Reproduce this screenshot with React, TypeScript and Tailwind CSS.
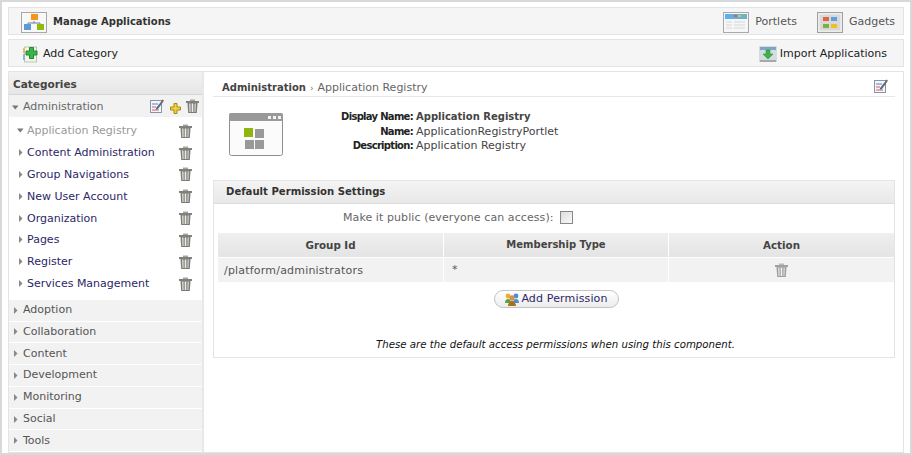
const Trash = ({ className = "" }: { className?: string }) => (
  <svg width="13" height="14" viewBox="0 0 13 14" className={className}>
    <path d="M4 .5h5v1.500H4z" fill="#a4a4a0" />
    <rect x="0" y="2" width="13" height="2" fill="#80807c" />
    <path d="M1.500 4h10l-.7 10H2.200z" fill="#7c7c78" />
    <path d="M3 4.500h1.500l.2 8.500H3.400z" fill="#d8d8d0" />
    <path d="M5.700 4.500h1.600v8.500H5.700z" fill="#ecece6" />
    <path d="M8.500 4.500H10l-.4 8.500H8.300z" fill="#c8c8c0" />
  </svg>
);

const Edit = () => (
  <svg width="14" height="14" viewBox="0 0 14 14">
    <rect x="0.500" y="1.500" width="11" height="12" fill="#f4f6fa" stroke="#8a94a8" />
    <path d="M2 5h6" stroke="#5a7fd0" />
    <path d="M2 8h4" stroke="#d06060" />
    <path d="M2 11h7" stroke="#d06060" />
    <path d="M6 9l6-7.500 1.500 1L8 10l-2.200.8z" fill="#5b6b7f" />
    <path d="M12 1l1.500 1" stroke="#a8552a" strokeWidth="1.500" />
  </svg>
);

const Plus = () => (
  <svg width="11" height="11" viewBox="0 0 11 11" className="mt-[5px] ml-[1px]">
    <path d="M4 .5h3v3.500h3.500v3H7v3.500H4V7H.5V4H4z" fill="#f0d040" stroke="#a88a10" />
  </svg>
);

const Caret = ({ open }: { open?: boolean }) =>
  open ? (
    <svg width="7" height="7" viewBox="0 0 7 7" className="shrink-0">
      <path d="M0 1.500h6.500L3.250 5.500z" fill="#777" />
    </svg>
  ) : (
    <svg width="7" height="7" viewBox="0 0 7 7" className="shrink-0">
      <path d="M1 0v7L4.500 3.500z" fill="#888" />
    </svg>
  );

const ManageIcon = () => (
  <svg width="26" height="21" viewBox="0 0 26 21" className="shrink-0">
    <rect x="0.500" y="0.500" width="25" height="20" fill="#f8f8f8" stroke="#a8a8a8" />
    <path d="M7 15v-4h12v4M13 9v2" stroke="#6d7f90" fill="none" />
    <rect x="10" y="2" width="7" height="6" fill="#f79420" />
    <rect x="3" y="12" width="7" height="6" fill="#5f98d8" />
    <rect x="16" y="12" width="7" height="6" fill="#8dbb10" />
  </svg>
);

const AddCategoryIcon = () => (
  <svg width="16" height="17" viewBox="0 0 16 17" className="shrink-0">
    <rect x="1.500" y="1" width="12" height="15" fill="#f4f4ec" stroke="#c0c4b8" />
    <rect x="0" y="2" width="2" height="5" fill="#f0b860" />
    <rect x="0" y="8" width="2" height="6" fill="#88b8d8" />
    <path d="M6.500 1.500h4v3.500H14v4h-3.500v3.500h-4V9H3V5h3.500z" fill="#3eb34a" stroke="#1f8a30" />
  </svg>
);

const PortletsIcon = () => (
  <svg width="26" height="21" viewBox="0 0 26 21" className="shrink-0">
    <rect x="0.500" y="0.500" width="25" height="20" fill="#f6f6f6" stroke="#a8a8a8" />
    <rect x="2" y="2" width="22" height="5" fill="#5cb0ec" />
    <rect x="11" y="3" width="3" height="2" fill="#e06030" />
    <rect x="15" y="3" width="3" height="2" fill="#e8c030" />
    <rect x="19" y="3" width="3" height="2" fill="#90c030" />
    <path d="M3 10h6M3 13h6M3 16h6M11 10h11M11 13h11M11 16h11" stroke="#e6e6e6" strokeWidth="2" />
  </svg>
);

const GadgetsIcon = () => (
  <svg width="26" height="21" viewBox="0 0 26 21" className="shrink-0">
    <rect x="0.500" y="0.500" width="25" height="20" fill="#e4e4e4" stroke="#a0a0a0" />
    <rect x="2" y="2" width="22" height="17" fill="#d8d8d8" stroke="#f4f4f4" />
    <rect x="6" y="5" width="6" height="4" fill="#e0653f" />
    <rect x="14" y="5" width="6" height="4" fill="#5aa0e0" />
    <rect x="6" y="12" width="6" height="4" fill="#80b040" />
    <rect x="14" y="12" width="6" height="4" fill="#f0c020" />
  </svg>
);

const ImportIcon = () => (
  <svg width="18" height="16" viewBox="0 0 18 16" className="shrink-0">
    <rect x="0" y="0" width="18" height="16" fill="#d4dcdf" />
    <rect x="1" y="1" width="16" height="3" fill="#7ea6c4" />
    <rect x="1" y="14" width="16" height="2" fill="#a8a8a8" />
    <path d="M7 4h4v4h3l-5 5-5-5h3z" fill="#3eb34a" stroke="#1f8a30" strokeWidth="0.500" />
  </svg>
);

const AppIcon = () => (
  <svg width="54" height="43" viewBox="0 0 54 43" className="shrink-0 mt-[3px]">
    <rect x="0.500" y="0.500" width="53" height="42" rx="2" fill="#fbfbfb" stroke="#8f8f8f" />
    <path d="M0 2a2 2 0 0 1 2-2h50a2 2 0 0 1 2 2v6H0z" fill="#999" />
    <rect x="39" y="3" width="3" height="3" fill="#f4f4f4" />
    <rect x="44" y="3" width="3" height="3" fill="#f4f4f4" />
    <rect x="49" y="3" width="3" height="3" fill="#f4f4f4" />
    <rect x="15" y="15" width="9" height="9" fill="#8fb50f" />
    <rect x="26" y="16" width="9" height="9" fill="#999" />
    <rect x="16" y="27" width="9" height="9" fill="#999" />
    <rect x="26" y="27" width="9" height="9" fill="#999" />
  </svg>
);

const PeopleIcon = () => (
  <svg width="14" height="13" viewBox="0 0 14 13" className="shrink-0">
    <circle cx="3" cy="3" r="2.400" fill="#e8b030" />
    <circle cx="11" cy="3" r="2.400" fill="#4a90d0" />
    <path d="M0 10c0-3 1.500-4 3-4s3 1 3 4z" fill="#60a040" />
    <path d="M8 10c0-3 1.500-4 3-4s3 1 3 4z" fill="#4a90d0" />
    <circle cx="7" cy="5" r="2.700" fill="#d89050" />
    <path d="M3 13c0-3 2-5 4-5s4 2 4 5z" fill="#a87020" />
  </svg>
);

const subItems = [
  "Content Administration",
  "Group Navigations",
  "New User Account",
  "Organization",
  "Pages",
  "Register",
  "Services Management",
];

const categories = ["Adoption", "Collaboration", "Content", "Development", "Monitoring", "Social", "Tools"];

export default function App() {
  return (
    <div
      className="w-[912px] h-[455px] overflow-hidden bg-white border-2 border-[#d9d9d9] px-[6px] pt-[5px] text-[11px] leading-[14px] text-[#555] flex flex-col gap-[4px]"
      style={{ fontFamily: '"DejaVu Sans", Verdana, sans-serif' }}
    >
      <div className="h-[28px] shrink-0 bg-[#f5f5f5] border border-[#e4e4e4] flex items-center pt-[2px] pl-[12px] pr-[12px]">
        <ManageIcon />
        <span className="ml-[6px] font-bold text-[#333] text-[10px]">Manage Applications</span>
        <div className="ml-auto flex items-center translate-x-[4px]">
          <PortletsIcon />
          <span className="ml-[6px] text-[#555]">Portlets</span>
          <span className="ml-[20px]" />
          <GadgetsIcon />
          <span className="ml-[6px] text-[#555]">Gadgets</span>
        </div>
      </div>

      <div className="h-[28px] shrink-0 bg-[#f5f5f5] border border-[#e4e4e4] flex items-center pt-[2px] pl-[14px] pr-[16px]">
        <AddCategoryIcon />
        <span className="ml-[4px] text-[#222]">Add Category</span>
        <div className="ml-auto flex items-center">
          <ImportIcon />
          <span className="ml-[3px] text-[#222]">Import Applications</span>
        </div>
      </div>

      <div className="flex-1 min-h-0 flex border border-[#e4e4e4] bg-white">
        <div className="w-[195px] shrink-0 border-r-2 border-[#e8e8e8] flex flex-col overflow-hidden">
          <div className="h-[23px] shrink-0 bg-gradient-to-b from-[#f2f2f2] to-[#e6e6e6] border-b border-[#d5d5d5] flex items-center pt-[1px] pl-[4px] font-bold text-[#444] text-[10.500px]">
            Categories
          </div>
          <div className="h-[22px] shrink-0 bg-[#f2f2f2] flex items-center pt-[2px] pl-[3px] pr-[3px]">
            <Caret open />
            <span className="ml-[4px] text-[#666]">Administration</span>
            <div className="ml-auto flex items-center gap-[5px] -mt-[3px]">
              <Edit />
              <Plus />
              <Trash />
            </div>
          </div>
          <div className="pt-[2.600px] pb-[5.100px]">
            <div className="h-[22px] flex items-center pl-[8px] pr-[10px]">
              <Caret open />
              <span className="ml-[3px] text-[#999]">Application Registry</span>
              <Trash className="ml-auto" />
            </div>
            {subItems.map((s) => (
              <div key={s} className="h-[21.860px] flex items-center pl-[9px] pr-[10px]">
                <Caret />
                <span className="ml-[2px] pt-[1px] text-[#2c2766]">{s}</span>
                <Trash className="ml-auto" />
              </div>
            ))}
          </div>
          {categories.map((c) => (
            <div key={c} className="h-[21.800px] shrink-0 bg-[#f2f2f2] border-b border-white flex items-center pl-[4px]">
              <Caret />
              <span className="ml-[3px] text-[#555]">{c}</span>
            </div>
          ))}
        </div>

        <div className="flex-1 min-w-0 pl-[9px] pr-[8px] flex flex-col">
          <div className="h-[25px] shrink-0 border-b border-[#e8e8e8] flex items-center pl-[9px] pt-[7px] pr-[7px]">
            <span className="font-bold text-[#444] text-[10px]">Administration</span>
            <span className="mx-[4px] text-[#777] text-[9px]">›</span>
            <span className="text-[#666]">Application Registry</span>
            <div className="ml-auto -mt-[3px]"><Edit /></div>
          </div>

          <div className="h-[83px] shrink-0 flex pl-[16px] pt-[13px]">
            <AppIcon />
            <div className="ml-[1px] flex flex-col">
              {[
                ["Display Name:", "Application Registry", true],
                ["Name:", "ApplicationRegistryPortlet", false],
                ["Description:", "Application Registry", false],
              ].map(([k, v, b]) => (
                <div key={k as string} className="h-[14.500px] flex">
                  <span className="w-[129px] text-right font-bold text-[#222] text-[10px] tracking-[-0.700px]">{k}</span>
                  <span className={`ml-[3px] ${b ? "font-bold text-[#444] text-[10px]" : "text-[#444]"}`}>{v}</span>
                </div>
              ))}
            </div>
          </div>

          <div className="h-[178px] shrink-0 border border-[#e4e4e4]">
            <div className="h-[23px] bg-gradient-to-b from-[#f4f4f4] to-[#e8e8e8] border-b border-[#dcdcdc] flex items-center pl-[12px] font-bold text-[#333] text-[10.100px]">
              Default Permission Settings
            </div>
            <div className="h-[29px] flex items-center pl-[129px] pb-[2px]">
              <span className="text-[#666] tracking-[0.080px]">Make it public (everyone can access):</span>
              <span className="ml-[6px] w-[13px] h-[13px] border border-[#888] bg-gradient-to-br from-[#dcdcdc] to-[#fafafa]" />
            </div>
            <div className="mx-[4px] grid grid-cols-[225px_1px_224px_1px_225px]">
              <div className="h-[24px] bg-gradient-to-b from-[#efefef] to-[#e4e4e4] flex items-center justify-center font-bold text-[#444] text-[10.300px]">Group Id</div>
              <div />
              <div className="h-[24px] bg-gradient-to-b from-[#efefef] to-[#e4e4e4] flex items-center justify-center font-bold text-[#444] text-[10px]">Membership Type</div>
              <div />
              <div className="h-[24px] bg-gradient-to-b from-[#efefef] to-[#e4e4e4] flex items-center justify-center font-bold text-[#444] text-[10.300px]">Action</div>
              <div className="mt-[1px] h-[24px] bg-[#f2f2f2] flex items-center pl-[6px] pt-[2px] text-[#555] tracking-[0.200px]">/platform/administrators</div>
              <div />
              <div className="mt-[1px] h-[24px] bg-[#f2f2f2] flex items-center pl-[8px] text-[#555]">*</div>
              <div />
              <div className="mt-[1px] h-[24px] bg-[#f2f2f2] flex items-center justify-center"><Trash className="opacity-70" /></div>
            </div>
            <div className="flex mt-[8px] pl-[280px]">
              <div className="w-[125px] h-[18px] rounded-[9px] border border-[#c4c4c4] bg-gradient-to-b from-white to-[#ececec] flex items-center justify-center gap-[2px] text-[#2c2766]">
                <PeopleIcon />
                <span className="tracking-[0.150px]">Add Permission</span>
              </div>
            </div>
            <div className="mt-[30px] text-center italic text-[#111] text-[10.200px] pl-[3px]">
              These are the default access permissions when using this component.
            </div>
          </div>
        </div>
      </div>
    </div>
  );
}
